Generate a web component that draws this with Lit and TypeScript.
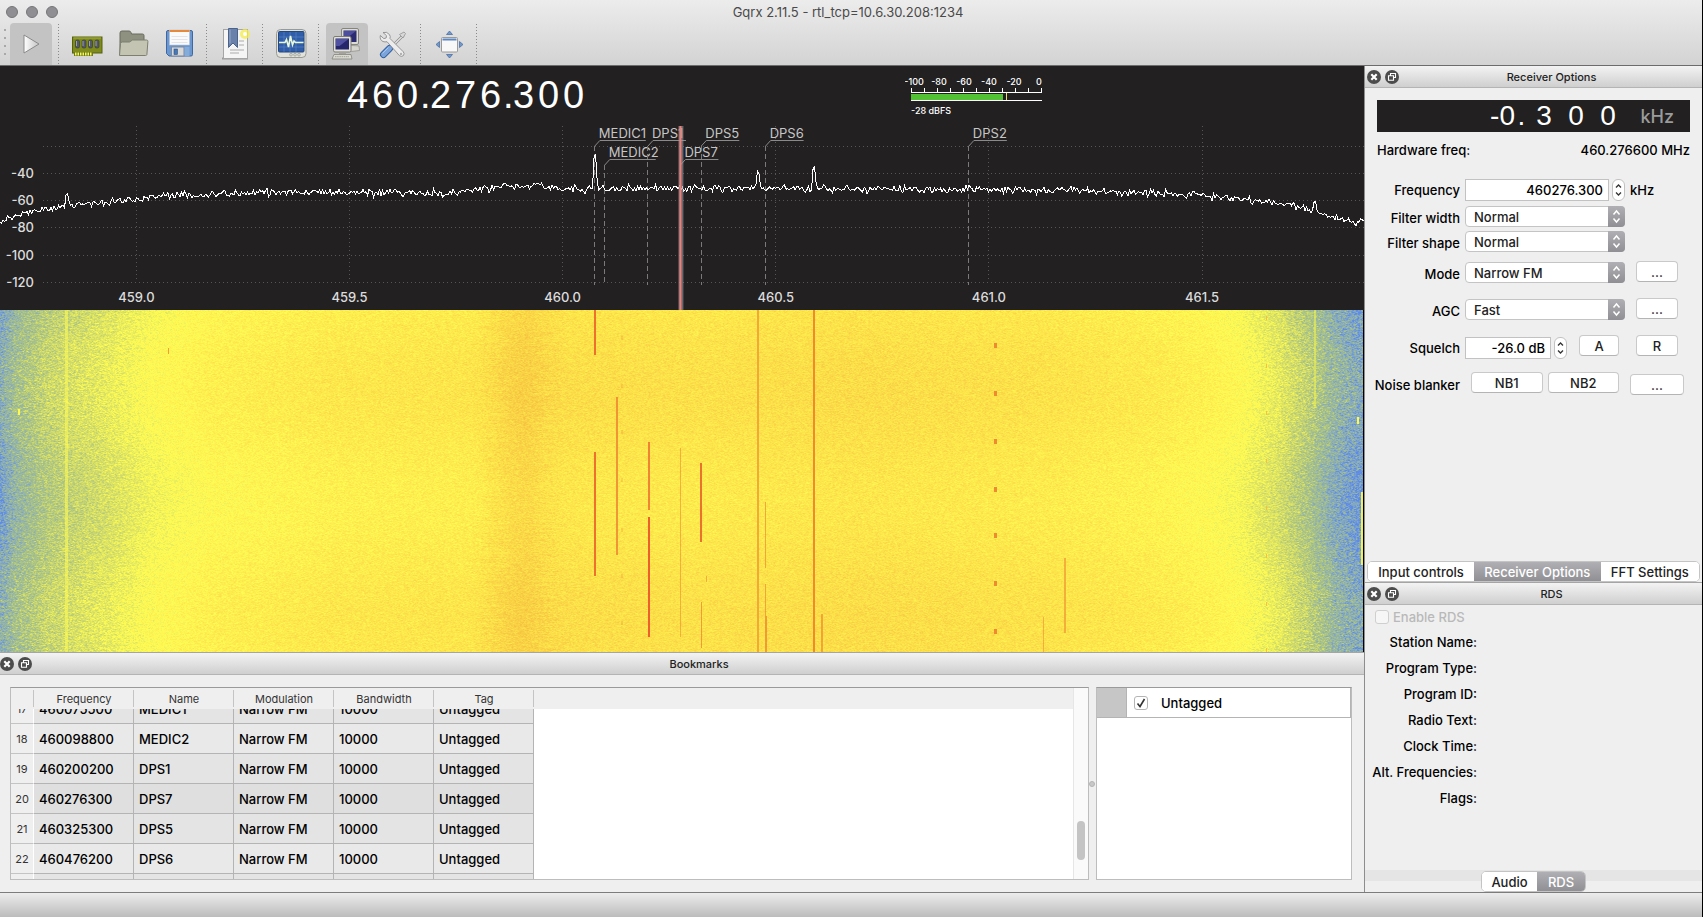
import { LitElement, html, svg, css, nothing } from 'lit';
import { customElement, property, query } from 'lit/decorators.js';
import { classMap } from 'lit/directives/class-map.js';

interface Bookmark {
  row: number;
  frequency: number;
  name: string;
  level: number;
}

const bookmarks: Bookmark[] = [
  { row: 17, frequency: 460075500, name: 'MEDIC1', level: 0 },
  { row: 18, frequency: 460098800, name: 'MEDIC2', level: 1 },
  { row: 19, frequency: 460200200, name: 'DPS1', level: 0 },
  { row: 20, frequency: 460276300, name: 'DPS7', level: 1 },
  { row: 21, frequency: 460325300, name: 'DPS5', level: 0 },
  { row: 22, frequency: 460476200, name: 'DPS6', level: 0 },
  { row: 23, frequency: 460953000, name: 'DPS2', level: 0 },
];

const START_MHZ = 458.68;
const SPAN_MHZ = 3.2;
// units of the plot's horizontal axis
const PLOT_W = 1364;

const freqToPercent = (mhz: number) => `${((mhz - START_MHZ) / SPAN_MHZ) * 100}%`;

// small seeded generator, so that the noise is the same on each load
function randomFrom(seed: number) {
  let s = seed;
  return () => {
    s = (s + 0x6d2b79f5) | 0;
    let t = Math.imul(s ^ (s >>> 15), 1 | s);
    t = (t + Math.imul(t ^ (t >>> 7), 61 | t)) ^ t;
    return ((t ^ (t >>> 14)) >>> 0) / 4294967296;
  };
}

function interpolate(points: number[][], x: number) {
  for (let i = 1; i < points.length; i++) {
    if (x <= points[i][0]) {
      const [x0, y0] = points[i - 1];
      const [x1, y1] = points[i];
      return y0 + ((y1 - y0) * (x - x0)) / (x1 - x0);
    }
  }
  return points[points.length - 1][1];
}

const controls = css`
  :host {
    font-family: Inter, 'Liberation Sans', sans-serif;
    font-size: 13px;
    font-weight: 500;
    color: #000;
  }

  * {
    box-sizing: border-box;
  }

  button,
  input,
  select {
    font: inherit;
    color: inherit;
    margin: 0;
  }

  .push {
    height: 21px;
    padding: 0;
    border: 1px solid #c9c9c9;
    border-bottom-color: #b4b4b4;
    border-radius: 4px;
    background: #fff;
    color: #222;
    line-height: 18px;
  }

  .tabs {
    display: flex;
    height: 21px;
    border: 1px solid #c4c4c4;
    border-radius: 5px;
    background: #fff;
    overflow: hidden;
  }

  .tab {
    border: 0;
    padding: 0;
    background: #fff;
    color: #222;
    line-height: 18px;
  }

  .tab.active {
    background: linear-gradient(#b0b0b4, #8f8f94);
    color: #fff;
  }

  .tick {
    appearance: none;
    width: 14px;
    height: 14px;
    border: 1px solid #b5b5b5;
    border-radius: 3px;
    background: #fff;
  }
`;

@customElement('dock-header')
export class DockHeader extends LitElement {

  @property({ type: String }) text = '';

  static styles = css`
    :host {
      display: flex;
      align-items: center;
      gap: 4px;
      height: 22px;
      padding: 0 2px;
      box-sizing: border-box;
      border-bottom: 1px solid #b4b4b4;
      background: linear-gradient(#f3f3f3, #cfcfcf);
      font-family: Inter, 'Liberation Sans', sans-serif;
      font-size: 11px;
    }

    button {
      display: flex;
      padding: 0;
      border: 0;
      background: none;
    }

    .title {
      flex: 1;
      text-align: center;
      color: #222;
    }
  `;

  render() {
    return html`
      <button aria-label="Close">
        <svg width="14" height="14" viewBox="0 0 14 14">
          <circle cx="7" cy="7" r="7" fill="#4c4c4c" />
          <path d="M4.3 4.3l5.4 5.4M9.7 4.3l-5.4 5.4" stroke="#fff" stroke-width="2.2" />
        </svg>
      </button>
      <button aria-label="Float">
        <svg width="14" height="14" viewBox="0 0 14 14">
          <circle cx="7" cy="7" r="7" fill="#4c4c4c" />
          <path d="M5.5 5.5v-2h5v4h-2M3.5 5.8h5v4.4h-5z" fill="none" stroke="#fff" stroke-width="1.1" />
        </svg>
      </button>
      <span class="title">${this.text}</span>
    `;
  }
}

const toolIcons = {
  play: svg`
    <path d="M9 7v18l15-9z" fill="url(#playFill)" stroke="#8a8a8a" stroke-linejoin="round" />
    <defs><linearGradient id="playFill"><stop stop-color="#fff" /><stop offset="1" stop-color="#c4c4c4" /></linearGradient></defs>`,
  ram: svg`
    <rect x="1.5" y="9" width="29.5" height="16" fill="#7f8c1b" stroke="#56600e" />
    <path d="M2.5 10h27.5" stroke="#a5b03a" />
    <g fill="#555962" stroke="#33363c" stroke-width=".6">
      <rect x="4.5" y="12" width="4" height="8" rx="1.5" /><rect x="11" y="12" width="4" height="8" rx="1.5" />
      <rect x="17.5" y="12" width="4" height="8" rx="1.5" /><rect x="24" y="12" width="4" height="8" rx="1.5" />
    </g>
    <path d="M5.5 13v5M12 13v5M18.5 13v5M25 13v5" stroke="#9a9ea8" />
    <rect x="3" y="24" width="19" height="4" fill="#6f7b12" />
    <path d="M4 26h17" stroke="#f3f56a" stroke-width="3" stroke-dasharray="1.5 1" />`,
  folder: svg`
    <path d="M3 27V5q0-2 2-2h7q1.5 0 2 1.5l.5 1.5h11q1.5 0 1.5 1.5V27z" fill="#8e9080" stroke="#686a5c" />
    <path d="M2.5 27.5l1-12q.2-1.5 2-1.5h7l3-2h14q1.5 0 1.4 1.5l-1 13q-.2 1-1.4 1z" fill="#c3c5b2" stroke="#7d7f70" />`,
  save: svg`
    <path d="M5 2.5h23q1.5 0 1.5 1.5v22.5q0 1.5-1.5 1.5h-22l-2.5-2.5V4q0-1.5 1.5-1.5z" fill="#6b98d0" stroke="#3e68a3" />
    <rect x="6.5" y="2" width="20" height="15" fill="#fafafa" stroke="#b8c4d4" stroke-width=".6" />
    <rect x="6.5" y="2" width="20" height="2" fill="#e8883a" />
    <path d="M8.5 8.5h16M8.5 11.5h16M8.5 14.5h16" stroke="#e2e4e8" />
    <rect x="8.5" y="19" width="12.5" height="9" fill="#d8d8d8" stroke="#7b8aa0" />
    <rect x="11" y="21" width="3.5" height="5.5" fill="#4777b5" stroke="#2c5288" stroke-width=".6" />
    <rect x="21.5" y="19" width="5" height="9" fill="#85abd9" />`,
  bookmark: svg`
    <path d="M3 30.5h26" stroke="#9a9a9a" stroke-width="2" />
    <rect x="4.5" y="1.5" width="24" height="29" fill="#f5f5f5" stroke="#a5a5a5" />
    <path d="M20 13h5M20 17h5M11 22h14M11 25h9" stroke="#d0d0d0" stroke-width="1.8" />
    <path d="M9.5 .5h9v19l-4.500-4.500-4.500 4.500z" fill="#6a82aa" stroke="#4a628c" />
    <path d="M11 1.500v14" stroke="#95a9c8" />
    <circle cx="26" cy="6" r="5" fill="#f4ee4a" opacity=".75" />
    <circle cx="26" cy="6" r="2" fill="#fff" />`,
  monitor: svg`
    <rect x="1.5" y="1.5" width="29.5" height="28" rx="4" fill="#e2e2dc" stroke="#9a9a94" />
    <rect x="3.5" y="3.5" width="25.5" height="20.5" rx="1" fill="#2f5da8" stroke="#23477f" />
    <path d="M4 9h25M4 14h25M4 19h25M9 4v20M15 4v20M21 4v20" stroke="#5b86c8" stroke-width=".6" />
    <path d="M4 14.5h6l1.5-3 2 7.5 2-11 2 9 1.5-4 1.5 1.5h8" fill="none" stroke="#e8f8d8" stroke-width="1.6" />
    <g fill="#d4d4ce" stroke="#9d9d98" stroke-width=".7"><circle cx="16" cy="26.7" r="1.4" /><circle cx="20" cy="26.7" r="1.4" /><circle cx="24" cy="26.7" r="1.4" /></g>`,
  network: svg`
    <path d="M14 17l14 1 .5 4.5-8 1z" fill="#d5d5ce" stroke="#8d8d86" stroke-width=".7" />
    <rect x="10.5" y=".5" width="17" height="16" rx="1.5" fill="#dcdcd4" stroke="#85857e" />
    <rect x="12.5" y="2.5" width="13" height="11.5" fill="#2b2b72" />
    <path d="M13 3h12l-9 7h-3z" fill="#5d5db0" opacity=".7" />
    <rect x="2.5" y="8.5" width="17.5" height="15.5" rx="1.5" fill="#e2e2da" stroke="#7d7d76" />
    <rect x="4.5" y="10.5" width="13.5" height="11" fill="#26266c" />
    <path d="M5 11h12.5l-9 7H5z" fill="#6464b8" opacity=".7" />
    <rect x="8" y="24" width="7" height="2" fill="#a3a39b" />
    <path d="M3 26.5h17l1 4.5H1z" fill="#dadad2" stroke="#84847c" stroke-width=".8" />
    <path d="M4 28.7h14" stroke="#a0a098" stroke-dasharray="1.5 .7" />`,
  tools: svg`
    <path d="M26.500 7l-13 13" stroke="#8a8a8a" stroke-width="2.6" />
    <path d="M26.500 7l-13 13" stroke="#e4e4e4" stroke-width="1.2" />
    <path d="M22.5 6.5l4.500-2.500 1.500 1.500-2.500 4.500z" fill="#d8d8d8" stroke="#8a8a8a" stroke-width=".7" />
    <path d="M12.5 20.5l-6 6" stroke="#315f9f" stroke-width="7" stroke-linecap="round" />
    <path d="M12.5 20.5l-6 6" stroke="#7ba5da" stroke-width="5.2" stroke-linecap="round" />
    <path d="M11.5 19.5l-6 6" stroke="#a9c6ec" />
    <path d="M6 4.5l3.5 3.2-.4 2.3-2.3.6L3.3 7.5Q2.500 12 6 13.500q2 .8 4 .2l12.500 14q2 1.500 3.800 0 1.700-2 0-3.900L13 10.500q.8-2-.6-4Q10 3.300 6 4.500z" fill="#ececec" stroke="#8c8c8c" stroke-width=".9" />
    <circle cx="24" cy="26" r="1.2" fill="#b0b0b0" />`,
  fullscreen: svg`
    <rect x="8.5" y="9.5" width="16" height="14.5" rx="1" fill="#f8f8f8" stroke="#9a9a9a" />
    <path d="M9.5 11.5h14" stroke="#5b86c0" stroke-width="2" />
    <path d="M13.5 6.500l3-3.500 3 3.500zM13.500 26.500l3 3.500 3-3.500zM6.500 13.500l-3.500 3 3.500 3zM26.500 13.500l3.500 3-3.500 3z" fill="#7398cc" stroke="#41699f" stroke-width=".7" />`,
};

const toolGroups = [
  [{ icon: toolIcons.play, label: 'Start', active: true }],
  [
    { icon: toolIcons.ram, label: 'Configure I/O' },
    { icon: toolIcons.folder, label: 'Open settings' },
    { icon: toolIcons.save, label: 'Save settings' },
  ],
  [{ icon: toolIcons.bookmark, label: 'Add bookmark' }],
  [{ icon: toolIcons.monitor, label: 'DSP status' }],
  [
    { icon: toolIcons.network, label: 'Remote control', active: true },
    { icon: toolIcons.tools, label: 'Remote settings' },
  ],
  [{ icon: toolIcons.fullscreen, label: 'Full screen' }],
];

@customElement('window-header')
export class WindowHeader extends LitElement {

  static styles = css`
    :host {
      display: block;
      border-bottom: 1px solid #6c6c6c;
      background: linear-gradient(#ececec, #d3d3d3);
      font-family: Inter, 'Liberation Sans', sans-serif;
      font-size: 13px;
    }

    .title-bar {
      display: grid;
      grid-template-columns: 1fr auto 1fr;
      align-items: center;
      height: 23px;
      padding: 0 12px 0 6px;
    }

    .lights {
      display: flex;
      gap: 8px;
    }

    .light {
      width: 12px;
      height: 12px;
      box-sizing: border-box;
      border: 1px solid #76767a;
      border-radius: 50%;
      background: #8e8e93;
    }

    .title {
      color: #4a4a4a;
    }

    .tool-bar {
      display: flex;
      gap: 4px;
      height: 42px;
    }

    .handle {
      width: 2px;
      height: 28px;
      margin: 6px 0 0 4px;
      background: repeating-linear-gradient(#a8a8a8 0 2px, transparent 2px 8px);
    }

    .tool {
      display: flex;
      align-items: center;
      justify-content: center;
      width: 42px;
      padding: 0;
      border: 0;
      background: none;
    }

    .tool.active {
      border-radius: 4px 4px 0 0;
      background: #c3c3c3;
    }

    .separator {
      width: 6px;
      background: repeating-linear-gradient(transparent 0 1px, #8a8a8a 1px 2px, transparent 2px 3px) 2px 0 / 1px 100% no-repeat;
    }
  `;

  render() {
    return html`
      <div class="title-bar">
        <div class="lights">
          <span class="light"></span>
          <span class="light"></span>
          <span class="light"></span>
        </div>
        <span class="title">Gqrx 2.11.5 - rtl_tcp=10.6.30.208:1234</span>
      </div>
      <div class="tool-bar">
        <span class="handle"></span>
        ${toolGroups.map((group) => html`
          ${group.map((tool) => html`
            <button class=${classMap({ tool: true, active: !!tool.active })} aria-label=${tool.label}>
              <svg width="32" height="32" viewBox="0 0 32 32" fill="none">${tool.icon}</svg>
            </button>
          `)}
          <span class="separator"></span>
        `)}
      </div>
    `;
  }
}

@customElement('frequency-bar')
export class FrequencyBar extends LitElement {

  static styles = css`
    :host {
      display: flex;
      justify-content: space-evenly;
      height: 60px;
      padding-left: 26px;
      box-sizing: border-box;
      background: #222021;
      color: #fff;
      font-family: 'Liberation Sans', Arial, sans-serif;
    }

    .digits {
      display: flex;
      padding-top: 8px;
      font-size: 38px;
      line-height: 42px;
    }

    .digit {
      width: 25px;
      text-align: center;
    }

    .digit.dot {
      width: 8px;
    }

    .meter {
      width: 140px;
      padding-top: 9px;
      font-size: 10px;
      font-weight: 500;
      font-family: Inter, 'Liberation Sans', sans-serif;
    }

    svg {
      display: block;
      width: 140px;
      height: 27px;
    }

    text {
      font-size: 9px;
      fill: #fff;
      text-anchor: middle;
    }

    .level {
      display: block;
      padding: 3px 6px;
      font-size: 9px;
      line-height: 12px;
    }
  `;

  render() {
    return html`
      <div class="digits">
        ${[...'460.276.300'].map((c) => html`<span class=${classMap({ digit: true, dot: c === '.' })}>${c}</span>`)}
      </div>
      <div class="meter">
        <svg viewBox="0 0 140 27">
          ${[-100, -80, -60, -40, -20, 0].map((db, i) => svg`<text x=${9 + i * 25} y="10">${db}</text>`)}
          ${Array.from({ length: 11 }, (_, i) => svg`<rect x=${6 + i * 13} y="13" width="1" height="4" fill="#fff" />`)}
          <rect x="6" y="17" width="131" height="1" fill="#fff" />
          <rect x="6" y="19" width="92" height="6" fill="#52c234" />
          <rect x="101" y="18" width="1" height="8" fill="#e8e26a" />
          <rect x="6" y="25" width="131" height="1" fill="#fff" />
        </svg>
        <span class="level">-28 dBFS</span>
      </div>
    `;
  }
}

// noise floor of the trace: [x, y]
const floor = [
  [0, 96], [10, 92], [22, 88], [45, 83], [67, 80], [100, 77], [134, 74], [156, 70],
  [200, 70], [250, 67], [350, 66], [400, 67], [445, 67], [470, 64], [500, 61], [535, 59],
  [560, 63], [700, 62], [860, 63], [1050, 64], [1080, 64], [1115, 67], [1170, 67], [1200, 69],
  [1250, 74], [1280, 77], [1305, 82], [1320, 88], [1340, 92], [1355, 98], [1364, 94],
];

const spikes = [
  [67, 67], [595, 26], [758, 44], [814, 39], [1315, 75],
];

function tracePoints() {
  const random = randomFrom(11);
  const points: string[] = [];
  for (let x = 0; x <= PLOT_W; x += 1.5) {
    const noise = (random() + random() + random() - 1.5) * 3.6;
    let y = interpolate(floor, x) + noise;
    for (const [sx, sy] of spikes) {
      const d = Math.abs(x - sx);
      if (d < 2.5) {
        y = Math.min(y, sy + d * d * (y - sy) * 0.18);
      }
    }
    points.push(`${x},${y.toFixed(1)}`);
  }
  return points.join(' ');
}

@customElement('spectrum-plot')
export class SpectrumPlot extends LitElement {

  static styles = css`
    :host {
      display: block;
      height: 184px;
      background: #222021;
      font-family: Inter, 'Liberation Sans', sans-serif;
    }

    svg {
      display: block;
      width: 100%;
      height: 184px;
      overflow: hidden;
    }

    .mark {
      overflow: visible;
    }

    .grid {
      stroke: #575556;
      stroke-dasharray: 1 3;
      shape-rendering: crispEdges;
    }

    .axis {
      fill: #dcdcdc;
      font-size: 13px;
      font-weight: 500;
    }

    .end {
      text-anchor: end;
    }

    .middle {
      text-anchor: middle;
    }

    .name {
      fill: #c6c6c6;
      font-size: 13px;
    }

    .flag {
      fill: none;
      stroke: #8a8a8a;
    }

    .drop {
      stroke: #7a7a7a;
      stroke-dasharray: 5 3;
      shape-rendering: crispEdges;
    }

    .trace {
      fill: none;
      stroke: #fff;
      vector-effect: non-scaling-stroke;
      shape-rendering: crispEdges;
    }
  `;

  private renderMark(b: Bookmark) {
    const top = b.level * 19;
    // width of the underline follows the name's length
    const end = b.name.length > 4 ? 51 : 38;
    return svg`
      <svg class="mark" x=${freqToPercent(b.frequency / 1e6)} y="0" width="1" height="184">
        <path class="flag" d="M0 ${top + 20}l5-5.5h${end - 5}" />
        <path class="drop" d="M0 ${top + 20}V159" />
        <text class="name" x="4" y=${top + 12}>${b.name}</text>
      </svg>
    `;
  }

  render() {
    return html`
      <svg>
        ${[20, 47, 74, 101, 129, 156].map((y, i) => svg`
          <line class="grid" x1="43" x2="100%" y1=${y} y2=${y} />
          ${i ? svg`<text class="axis end" x="34" y=${y + 5}>${-20 - i * 20}</text>` : nothing}
        `)}
        ${[459, 459.5, 460, 460.5, 461, 461.5].map((f) => svg`
          <line class="grid" x1=${freqToPercent(f)} x2=${freqToPercent(f)} y1="0" y2="156" />
          <text class="axis middle" x=${freqToPercent(f)} y="176">${f.toFixed(1)}</text>
        `)}
        ${bookmarks.map((b) => this.renderMark(b))}
        <svg viewBox="0 0 ${PLOT_W} 184" preserveAspectRatio="none">
          <polyline class="trace" points=${tracePoints()} />
        </svg>
        <svg class="mark" x=${freqToPercent(460.2763)} y="0" width="1" height="184">
          <rect x="-2" y="0" width="5" height="184" fill="#9a9aa4" opacity=".6" />
          <rect x="-1" y="0" width="2" height="184" fill="#f07f78" />
        </svg>
      </svg>
    `;
  }
}

// signal strength across the band: 0 is blue, 0.5 yellow, 1 red
const bandLevel = [
  [0, 0.13], [15, 0.24], [45, 0.34], [75, 0.385], [110, 0.43], [150, 0.485], [210, 0.53], [330, 0.56],
  [470, 0.57], [500, 0.6], [525, 0.62], [545, 0.605], [580, 0.595], [700, 0.585], [860, 0.6],
  [1050, 0.58], [1150, 0.555], [1210, 0.525], [1240, 0.495], [1280, 0.42], [1310, 0.32],
  [1330, 0.21], [1350, 0.13], [1364, 0.1],
];

const palette = [
  [0, 92, 138, 232],
  [0.12, 128, 166, 196],
  [0.3, 172, 196, 130],
  [0.42, 222, 228, 98],
  [0.5, 254, 252, 84],
  [0.6, 252, 226, 74],
  [0.72, 245, 190, 62],
  [1, 235, 90, 45],
];

// [x, from, to, width, colour]
const signals: [number, number, number, number, string][] = [
  [594, 0, 45, 2, '#ee702c'],
  [594, 142, 266, 2, '#ee702c'],
  [616, 87, 245, 2, '#ef8130cc'],
  [648, 132, 200, 2, '#ee6a2ccc'],
  [648, 207, 327, 2, '#ee5f2c'],
  [680, 138, 327, 1, '#ee8a3099'],
  [701, 153, 232, 2, '#e8602ae0'],
  [702, 292, 338, 1, '#ee7a30b0'],
  [707, 266, 272, 1, '#ee8a30a0'],
  [758, 0, 342, 2, '#f0a034e0'],
  [766, 192, 258, 1, '#ee8a30b0'],
  [766, 274, 306, 1, '#ee8a30b0'],
  [766, 306, 342, 2, '#ee7a30b0'],
  [814, 0, 342, 2, '#f08a2c'],
  [822, 304, 342, 2, '#f09030c0'],
  [1065, 248, 323, 2, '#f09c34c0'],
  [1044, 307, 342, 1, '#f09034a0'],
  [65, 0, 342, 3, '#fcf854a0'],
  [1315, 0, 98, 2, '#eef050a0'],
  [1358, 107, 114, 2, '#fff850'],
  [18, 99, 105, 2, '#fff850'],
  [1362, 182, 255, 2, '#f4f054'],
  [168, 38, 44, 1, '#f0a034'],
  ...[35, 83, 131, 179, 225, 273, 321].map((y): [number, number, number, number, string] => [995, y - 2, y + 3, 3, '#f08a30']),
  ...[8, 56, 103, 151, 198, 246, 294, 340].map((y): [number, number, number, number, string] => [1267, y - 2, y + 2, 1, '#f8c040']),
  ...[28, 76, 122, 170, 220, 266, 313].map((y): [number, number, number, number, string] => [621, y - 2, y + 2, 2, '#f0a03460']),
];

@customElement('waterfall-view')
export class WaterfallView extends LitElement {

  @query('canvas') canvas!: HTMLCanvasElement;

  private observer = new ResizeObserver(() => this.paint());

  static styles = css`
    :host {
      display: block;
      flex: 1;
      min-height: 200px;
      position: relative;
      border-right: 1px solid #000;
      background: #fde24a;
    }

    canvas {
      position: absolute;
      inset: 0;
      width: 100%;
      height: 100%;
    }
  `;

  firstUpdated() {
    this.observer.observe(this);
    this.paint();
  }

  disconnectedCallback() {
    super.disconnectedCallback();
    this.observer.disconnect();
  }

  private paint() {
    const w = this.canvas.clientWidth;
    const h = this.canvas.clientHeight;
    const ctx = this.canvas.getContext('2d');
    if (!ctx || !w || !h) {
      return;
    }
    this.canvas.width = w;
    this.canvas.height = h;

    const lut: number[][] = [];
    for (let i = 0; i <= 255; i++) {
      lut.push([1, 2, 3].map((c) => interpolate(palette.map((p) => [p[0], p[c]]), i / 255)));
    }
    const base = Array.from({ length: w }, (_, x) => interpolate(bandLevel, (x / w) * PLOT_W));

    const random = randomFrom(5);
    const image = ctx.createImageData(w, h);
    for (let y = 0; y < h; y++) {
      const drift = Math.cos(((y - 75) / 235) * Math.PI * 2) * 0.018;
      // streaks near the centre of the band differ from row to row
      const streakFrom = 478 + random() * 34;
      const streakTo = 530 + random() * 32;
      let previous = 0;
      for (let x = 0; x < w; x++) {
        const edge = Math.max(0, 0.5 - base[x]);
        const fresh = random() + random() - 1;
        const noise = fresh * 0.75 + previous * 0.35;
        previous = fresh;
        let v = base[x] + drift * (1 + edge * 4) + noise * (0.07 + edge * 0.36);
        const ux = (x / w) * PLOT_W;
        if (ux > streakFrom && ux < streakTo) {
          v += 0.024;
        }
        const [r, g, b] = lut[Math.max(0, Math.min(255, Math.round(v * 255)))];
        const i = (y * w + x) * 4;
        image.data[i] = r;
        image.data[i + 1] = g;
        image.data[i + 2] = b;
        image.data[i + 3] = 255;
      }
    }
    ctx.putImageData(image, 0, 0);

    for (const [x, from, to, width, color] of signals) {
      ctx.fillStyle = color;
      ctx.fillRect(Math.round((x / PLOT_W) * w), (from / 342) * h, width, ((to - from) / 342) * h);
    }
  }

  render() {
    return html`<canvas></canvas>`;
  }
}

@customElement('bookmarks-dock')
export class BookmarksDock extends LitElement {

  @query('.rows') rows!: HTMLElement;

  static styles = [controls, css`
    :host {
      display: block;
      border-top: 1px solid #a5a5a5;
      background: #efefef;
    }

    dock-header {
      padding-left: 0;
    }

    .body {
      display: grid;
      grid-template-columns: minmax(0, 1fr) 7px 256px;
      height: 217px;
      padding: 12px 12px 12px 10px;
    }

    .frame {
      display: flex;
      border: 1px solid #bdbdbd;
      border-top-color: #9a9a9a;
      background: #fff;
      min-width: 0;
    }

    .rows {
      flex: 1;
      height: 191px;
      overflow: hidden;
    }

    table {
      width: 100%;
      border-spacing: 0;
      table-layout: fixed;
    }

    th {
      font-size: 11px;
      font-weight: 400;
      color: #333;
      background: #efefef;
      padding: 0;
    }

    thead th {
      position: sticky;
      top: 0;
      height: 21px;
      background: #efefef linear-gradient(#c4c4c4, #c4c4c4) right 2px / 1px 17px no-repeat;
    }

    thead th:last-child {
      background-image: none;
    }

    .index {
      width: 23px;
    }

    .col {
      width: 100px;
    }

    tbody th {
      height: 30px;
      border-bottom: 1px solid #c4c4c4;
      border-right: 1px solid #fff;
    }

    tbody td {
      height: 30px;
      padding: 0 5px;
      border-bottom: 1px solid #b4b4b4;
      border-right: 1px solid #b4b4b4;
      background: #e4e4e4;
    }

    tbody tr:nth-child(4n + 2) td {
      background: #e9e9e9;
    }

    tbody tr:nth-child(4n) td {
      background: #dfdfdf;
    }

    tbody td:last-child {
      border: 0;
      background: #fff !important;
    }

    .scroll {
      width: 15px;
      padding: 133px 3px 0 3px;
      border-left: 1px solid #e6e6e6;
      background: #fafafa;
    }

    .thumb {
      display: block;
      height: 39px;
      width: 8px;
      border-radius: 4px;
      background: #c4c4c4;
    }

    .splitter {
      align-self: center;
      width: 6px;
      height: 6px;
      border: 1px solid #b4b4b4;
      border-radius: 50%;
      background: #c8c8c8;
    }

    .tag {
      display: grid;
      grid-template-columns: 30px 34px 1fr;
      align-items: center;
      flex: 1;
      height: 30px;
      border-bottom: 1px solid #b4b4b4;
      border-right: 1px solid #b4b4b4;
    }

    .swatch {
      height: 29px;
      border-right: 1px solid #b4b4b4;
      background: #c6c6c6;
    }

    .check {
      position: relative;
      display: flex;
      padding-left: 7px;
    }

    .check svg {
      position: absolute;
      left: 9px;
      top: 2px;
      pointer-events: none;
    }
  `];

  firstUpdated() {
    this.rows.scrollTop = 15;
  }

  render() {
    return html`
      <dock-header text="Bookmarks"></dock-header>
      <div class="body">
        <div class="frame">
          <div class="rows">
            <table>
              <thead>
                <tr>
                  <th class="index"></th>
                  ${['Frequency', 'Name', 'Modulation', 'Bandwidth', 'Tag'].map((c) => html`<th class="col">${c}</th>`)}
                  <th></th>
                </tr>
              </thead>
              <tbody>
                ${bookmarks.map((b) => html`
                  <tr>
                    <th>${b.row}</th>
                    <td>${b.frequency}</td>
                    <td>${b.name}</td>
                    <td>Narrow FM</td>
                    <td>10000</td>
                    <td>Untagged</td>
                    <td></td>
                  </tr>
                `)}
              </tbody>
            </table>
          </div>
          <div class="scroll"><span class="thumb"></span></div>
        </div>
        <span class="splitter"></span>
        <div class="frame">
          <div class="tag">
            <span class="swatch"></span>
            <span class="check">
              <input class="tick" id="untagged" type="checkbox" checked />
              <svg width="10" height="10" viewBox="0 0 10 10">
                <path d="M1.5 5.5l2.5 3 4.5-7.5" fill="none" stroke="#333" stroke-width="1.6" />
              </svg>
            </span>
            <label for="untagged">Untagged</label>
          </div>
        </div>
      </div>
    `;
  }
}

@customElement('receiver-options')
export class ReceiverOptions extends LitElement {

  static styles = [controls, css`
    :host {
      display: flex;
      flex-direction: column;
      flex: 1;
      background: #efefef;
    }

    .offset {
      display: flex;
      align-items: center;
      justify-content: flex-end;
      height: 32px;
      margin: 12px 12px 0;
      padding-right: 16px;
      background: #222021;
      color: #fff;
      font-family: 'Liberation Sans', Arial, sans-serif;
      font-size: 28px;
    }

    .cell {
      width: 32px;
      text-align: center;
    }

    .cell.dot {
      width: 13px;
    }

    .unit {
      width: 50px;
      text-align: right;
      color: #9b9b9b;
      font-family: Inter, 'Liberation Sans', sans-serif;
      font-size: 18px;
    }

    .hardware {
      display: flex;
      justify-content: space-between;
      padding: 9px 12px 0;
      line-height: 18px;
    }

    .form {
      display: grid;
      grid-template-rows: 30px 25px 25px 37px 37px 37px 37px;
      padding-top: 16px;
      flex: 1;
      align-content: start;
    }

    .row {
      display: grid;
      grid-template-columns: 95px 160px 54px;
      align-items: center;
      column-gap: 5px;
    }

    .row > label,
    .row > .label {
      justify-self: end;
      white-space: nowrap;
    }

    .pair {
      display: flex;
      align-items: center;
      gap: 3px;
    }

    .pair .number {
      flex: 1;
      min-width: 0;
    }

    .number {
      height: 22px;
      padding: 0 5px;
      border: 1px solid #c2c2c2;
      background: #fff;
      text-align: right;
    }

    .pair .short {
      flex: 0 0 86px;
    }

    .spin {
      display: flex;
      flex: none;
      width: 13px;
      height: 22px;
      padding: 0;
      border: 1px solid #c2c2c2;
      border-radius: 6px;
      background: #fff;
      align-items: center;
      justify-content: center;
    }

    .row .push {
      margin-bottom: 4px;
    }

    .auto {
      flex: 1;
      margin-left: 9px;
      margin-right: 6px;
    }

    .combo {
      display: flex;
      position: relative;
      margin-bottom: 2px;
    }

    select {
      appearance: none;
      width: 100%;
      height: 21px;
      padding: 0 8px;
      border: 1px solid #c4c4c4;
      border-radius: 4px;
      background: #fff;
      color: #222;
      line-height: 18px;
    }

    .arrows {
      position: absolute;
      top: 0;
      right: 0;
      pointer-events: none;
      border-radius: 0 4px 4px 0;
      background: linear-gradient(#b0b0b4, #8f8f94);
    }

    .more {
      width: 42px;
      justify-self: center;
    }

    .blankers {
      display: flex;
      gap: 5px;
      padding: 0 6px;
    }

    .blankers .push {
      flex: 1;
    }

    .row .wide {
      width: 54px;
      margin-bottom: 0;
    }

    .tabs {
      margin: 0 2px;
    }

    .tab {
      flex: 1 1 auto;
    }
  `];

  private renderCombo(id: string, label: string, value: string, more = false) {
    return html`
      <div class="row">
        <label for=${id}>${label}</label>
        <span class="combo">
          <select id=${id}><option>${value}</option></select>
          <svg class="arrows" width="17" height="21" viewBox="0 0 17 21">
            <path d="M5.5 8.5l3-3.500 3 3.500M5.500 12.500l3 3.500 3-3.500" fill="none" stroke="#fff" stroke-width="1.5" />
          </svg>
        </span>
        ${more ? html`<button class="push more" aria-label="${label} options">...</button>` : nothing}
      </div>
    `;
  }

  private renderSpin(label: string) {
    return html`
      <button class="spin" aria-label=${label}>
        <svg width="7" height="14" viewBox="0 0 7 14">
          <path d="M1 4.5l2.5-2.5 2.5 2.5M1 9.5l2.5 2.5 2.5-2.5" fill="none" stroke="#333" stroke-width="1.3" />
        </svg>
      </button>
    `;
  }

  render() {
    return html`
      <dock-header text="Receiver Options"></dock-header>
      <div class="offset">
        <span>-0</span>
        <span class="cell dot">.</span>
        <span class="cell">3</span>
        <span class="cell">0</span>
        <span class="cell">0</span>
        <span class="unit">kHz</span>
      </div>
      <div class="hardware"><span>Hardware freq:</span><span>460.276600 MHz</span></div>
      <div class="form">
        <div class="row">
          <label for="frequency">Frequency</label>
          <span class="pair">
            <input class="number" id="frequency" value="460276.300" />
            ${this.renderSpin('Step frequency')}
          </span>
          <span>kHz</span>
        </div>
        ${this.renderCombo('width', 'Filter width', 'Normal')}
        ${this.renderCombo('shape', 'Filter shape', 'Normal')}
        ${this.renderCombo('mode', 'Mode', 'Narrow FM', true)}
        ${this.renderCombo('agc', 'AGC', 'Fast', true)}
        <div class="row">
          <label for="squelch">Squelch</label>
          <span class="pair">
            <input class="number short" id="squelch" value="-26.0 dB" />
            ${this.renderSpin('Step squelch')}
            <button class="push auto">A</button>
          </span>
          <button class="push more">R</button>
        </div>
        <div class="row">
          <span class="label">Noise blanker</span>
          <span class="blankers">
            <button class="push">NB1</button>
            <button class="push">NB2</button>
          </span>
          <button class="push wide" aria-label="Noise blanker options">...</button>
        </div>
      </div>
      <div class="tabs">
        <button class="tab">Input controls</button>
        <button class="tab active">Receiver Options</button>
        <button class="tab">FFT Settings</button>
      </div>
    `;
  }
}

@customElement('rds-panel')
export class RdsPanel extends LitElement {

  static styles = [controls, css`
    :host {
      display: flex;
      flex-direction: column;
      height: 310px;
      border-top: 1px solid #a5a5a5;
      background: #efefef;
      box-sizing: border-box;
    }

    .enable {
      display: flex;
      align-items: center;
      gap: 4px;
      padding: 4px 10px 0;
      line-height: 16px;
      color: #b9b9b9;
    }

    .enable .tick {
      border-color: #cfcfcf;
      background: #f6f6f6;
    }

    .fields {
      flex: 1;
      width: 112px;
      margin: 4px 0 0;
      text-align: right;
      line-height: 26px;
      white-space: nowrap;
    }

    .footer {
      display: flex;
      justify-content: center;
      background: linear-gradient(#e5e5e5, #e5e5e5) 0 0 / 100% 11px no-repeat;
    }

    .tabs {
      width: 105px;
      margin-top: 1px;
    }

    .tab {
      flex: 1;
    }

    .tab.active {
      flex: 0 0 48px;
    }
  `];

  render() {
    return html`
      <dock-header text="RDS"></dock-header>
      <div class="enable">
        <input class="tick" id="rds" type="checkbox" disabled />
        <label for="rds">Enable RDS</label>
      </div>
      <div class="fields">
        ${['Station Name:', 'Program Type:', 'Program ID:', 'Radio Text:', 'Clock Time:', 'Alt. Frequencies:', 'Flags:']
          .map((f) => html`<div>${f}</div>`)}
      </div>
      <div class="footer">
        <div class="tabs">
          <button class="tab">Audio</button>
          <button class="tab active">RDS</button>
        </div>
      </div>
    `;
  }
}

@customElement('app-root')
export class AppRoot extends LitElement {

  static styles = css`
    :host {
      display: flex;
      flex-direction: column;
      height: 100vh;
      box-sizing: border-box;
      border-right: 1px solid #000;
      background: #efefef;
      overflow: hidden;
    }

    .main {
      display: grid;
      grid-template-columns: minmax(0, 1fr) 338px;
      flex: 1;
    }

    .left {
      display: flex;
      flex-direction: column;
    }

    .right {
      display: flex;
      flex-direction: column;
      border-left: 1px solid #8d8d8d;
    }

    .status {
      height: 25px;
      box-sizing: border-box;
      border-top: 1px solid #7c7c7c;
      background: linear-gradient(#ececec, #bcbcbc);
    }
  `;

  render() {
    return html`
      <window-header></window-header>
      <div class="main">
        <div class="left">
          <frequency-bar></frequency-bar>
          <spectrum-plot></spectrum-plot>
          <waterfall-view></waterfall-view>
          <bookmarks-dock></bookmarks-dock>
        </div>
        <div class="right">
          <receiver-options></receiver-options>
          <rds-panel></rds-panel>
        </div>
      </div>
      <div class="status"></div>
    `;
  }
}
